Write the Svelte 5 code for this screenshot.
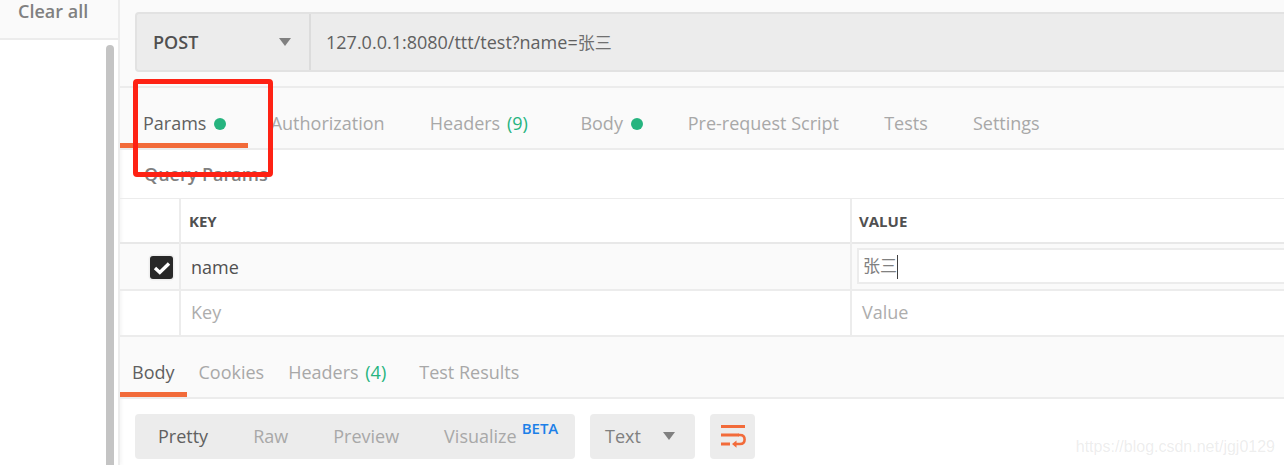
<script>
    const requestTabs = [
        { name: 'Params', dot: true, active: true },
        { name: 'Authorization' },
        { name: 'Headers', count: 9 },
        { name: 'Body', dot: true },
        { name: 'Pre-request Script' },
        { name: 'Tests' },
        { name: 'Settings' }
    ];
    const responseTabs = [
        { name: 'Body', active: true },
        { name: 'Cookies' },
        { name: 'Headers', count: 4 },
        { name: 'Test Results' }
    ];
</script>

<div class="page">
    <aside class="sidebar">
        <div class="clear">Clear all</div>
        <div class="history">
            <div class="scrollbar"></div>
        </div>
    </aside>

    <main>
        <div class="request">
            <div class="urlbar">
                <div class="method">
                    <span>POST</span>
                    <i class="caret"></i>
                </div>
                <div class="url">127.0.0.1:8080/ttt/test?name=<span class="cjk">张三</span></div>
            </div>
        </div>

        <nav class="tabs reqtabs">
            {#each requestTabs as tab}
                <div class="tab" class:active={tab.active} class:counted={tab.count}>
                    {tab.name}
                    {#if tab.count}<span class="count">({tab.count})</span>{/if}
                    {#if tab.dot}<i class="dot"></i>{/if}
                </div>
            {/each}
        </nav>

        <div class="query">Query Params</div>

        <div class="table">
            <div class="row head">
                <div class="check"></div>
                <div class="key">KEY</div>
                <div class="value">VALUE</div>
            </div>
            <div class="row filled">
                <div class="check">
                    <span class="box">
                        <svg width="18" height="14" viewBox="0 0 18 14">
                            <path d="M2 7 L6.8 11.5 L16 2.5" fill="none" stroke="#fff" stroke-width="3.4" />
                        </svg>
                    </span>
                </div>
                <div class="key cell">name</div>
                <div class="value editing">
                    <div class="input">张三<i class="cursor"></i></div>
                </div>
            </div>
            <div class="row empty">
                <div class="check"></div>
                <div class="key cell">Key</div>
                <div class="value cell">Value</div>
            </div>
        </div>

        <nav class="tabs restabs">
            {#each responseTabs as tab}
                <div class="tab" class:active={tab.active} class:counted={tab.count}>
                    {tab.name}
                    {#if tab.count}<span class="count">({tab.count})</span>{/if}
                </div>
            {/each}
        </nav>

        <div class="toolbar">
            <div class="modes">
                <span class="on">Pretty</span>
                <span>Raw</span>
                <span>Preview</span>
                <span class="vis">Visualize<sup>BETA</sup></span>
            </div>
            <div class="format">
                <span>Text</span>
                <i class="caret"></i>
            </div>
            <div class="wrap">
                <svg width="26" height="24" viewBox="0 0 26 24">
                    <path d="M1 1.5 H25 M1 10 H19 M1 19 H10" fill="none" stroke="#f26b3a" stroke-width="2.8" />
                    <path d="M18 10 H20 C23 10 24.6 12 24.6 14.5 C24.6 17.5 22.8 19 20 19 H15" fill="none" stroke="#f26b3a" stroke-width="2.6" />
                    <path d="M16.5 15.5 L12 19 L16.5 22.8 Z" fill="#f26b3a" />
                </svg>
            </div>
            <div class="watermark">https://blog.csdn.net/jgj0129</div>
        </div>
    </main>

    <div class="highlight"></div>
</div>

<style>
    :global(body) {
        margin: 0;
        background: #fff;
        overflow: hidden;
    }
    .page {
        position: relative;
        display: flex;
        width: 1284px;
        height: 465px;
        overflow: hidden;
        font-family: "Open Sans", "Noto Sans CJK SC", sans-serif;
        font-size: 18px;
        color: #505050;
    }
    .sidebar {
        width: 120px;
        box-sizing: border-box;
        flex: none;
        display: flex;
        flex-direction: column;
        border-right: 2px solid #ececec;
        box-shadow: 2px 0 3px rgba(0, 0, 0, 0.04);
    }
    .clear {
        height: 42px;
        box-sizing: border-box;
        padding-left: 18px;
        line-height: 23px;
        color: #808080;
        font-weight: 600;
        background: #fafafa;
        border-bottom: 2px solid #ececec;
    }
    .history {
        flex: 1;
        padding: 5px 4px 0 106px;
    }
    .scrollbar {
        width: 8px;
        height: 420px;
        border-radius: 4px 4px 0 0;
        background: #c4c4c4;
    }
    main {
        flex: 1;
        min-width: 0;
    }
    .request {
        height: 88px;
        box-sizing: border-box;
        padding: 12px 0 0 15px;
        background: #fafafa;
        border-bottom: 2px solid #ececec;
    }
    .urlbar {
        display: flex;
        height: 60px;
        box-sizing: border-box;
        border: 2px solid #e2e2e2;
        border-right: 0;
        border-radius: 4px 0 0 4px;
        background: #ececec;
    }
    .method {
        width: 174px;
        box-sizing: border-box;
        display: flex;
        align-items: center;
        justify-content: space-between;
        padding: 0 18px 0 16px;
        border-right: 2px solid #dcdcdc;
        font-weight: 600;
    }
    .url {
        flex: 1;
        padding-left: 15px;
        line-height: 56px;
        color: #606060;
    }
    .cjk {
        font-size: 17px;
        color: #707070;
    }
    .caret {
        width: 0;
        height: 0;
        border-left: 6.5px solid transparent;
        border-right: 6.5px solid transparent;
        border-top: 8px solid #808080;
    }
    .tabs {
        display: flex;
        box-sizing: border-box;
        background: #fafafa;
        border-bottom: 2px solid #ececec;
        color: #a8a8a8;
    }
    .tab {
        box-sizing: border-box;
        white-space: nowrap;
        border-bottom: 5px solid transparent;
    }
    .tab.active {
        color: #606060;
        border-bottom-color: #f26b3a;
    }
    .reqtabs {
        height: 62px;
    }
    .reqtabs .tab {
        height: 60px;
        padding: 23px 22.6px 0;
    }
    .reqtabs .tab.active {
        padding: 23px 22px 0 23px;
    }
    .reqtabs .tab.counted {
        padding-right: 30px;
    }
    .restabs {
        height: 62px;
    }
    .restabs .tab {
        height: 60px;
        padding: 23px 12px 0;
    }
    .restabs .tab.counted {
        padding-right: 21px;
    }
    .count {
        margin-left: 2px;
        color: #26b47f;
    }
    .dot {
        display: inline-block;
        width: 12px;
        height: 12px;
        margin-left: 3px;
        border-radius: 50%;
        background: #26b47f;
    }
    .query {
        height: 48px;
        box-sizing: border-box;
        padding: 12px 0 0 24px;
        font-weight: 600;
        line-height: 24px;
        color: #808080;
    }
    .table {
        border-top: 1px solid #ececec;
    }
    .row {
        display: grid;
        grid-template-columns: 61px 671px 1fr;
        box-sizing: border-box;
    }
    .row > div {
        box-sizing: border-box;
    }
    .row > div:not(:last-child) {
        border-right: 2px solid #ececec;
    }
    .head {
        height: 45px;
        line-height: 45px;
        border-bottom: 2px solid #e8e8e8;
        font-size: 15px;
        font-weight: 700;
    }
    .head .key {
        padding-left: 8px;
    }
    .head .value {
        padding-left: 7px;
    }
    .filled {
        height: 47px;
        background: #fafafa;
        border-bottom: 2px solid #ececec;
    }
    .empty {
        height: 46px;
        border-bottom: 2px solid #ececec;
        color: #adadad;
    }
    .check {
        display: flex;
        align-items: center;
        justify-content: flex-end;
        padding: 1px 6px 0 0;
    }
    .box {
        width: 23px;
        height: 23px;
        display: flex;
        align-items: center;
        justify-content: center;
        border-radius: 3px;
        background: #282828;
        box-shadow: 0 0 0 1.5px #eeeeee;
    }
    .cell {
        padding-left: 10px;
        line-height: 46px;
    }
    .empty .cell {
        line-height: 42px;
    }
    .editing {
        padding: 4px 0 0 5px;
        overflow: hidden;
    }
    .input {
        height: 36px;
        box-sizing: border-box;
        margin-right: -10px;
        padding-left: 4px;
        border: 2px solid #ececec;
        background: #fff;
        font-size: 17px;
        line-height: 32px;
        color: #808080;
    }
    .cursor {
        display: inline-block;
        width: 1px;
        height: 24px;
        background: #404040;
        vertical-align: middle;
    }
    .toolbar {
        position: relative;
        display: flex;
        gap: 15px;
        padding: 15px 0 0 15px;
    }
    .modes,
    .format,
    .wrap {
        height: 45px;
        box-sizing: border-box;
        display: flex;
        align-items: center;
        background: #ececec;
        border-radius: 4px;
    }
    .modes {
        width: 440px;
        padding: 0 0 2px 23px;
        color: #a8a8a8;
    }
    .modes span {
        margin-right: 45px;
    }
    .modes span.on {
        color: #606060;
    }
    .modes span.vis {
        margin: 0;
    }
    sup {
        margin-left: 5px;
        font-size: 15px;
        font-weight: 600;
        line-height: 0;
        vertical-align: 9px;
        color: #1c80e8;
    }
    .format {
        width: 105px;
        justify-content: space-between;
        padding: 0 20px 2px 15px;
        color: #808080;
    }
    .wrap {
        width: 45px;
        justify-content: center;
    }
    .watermark {
        position: absolute;
        right: 9px;
        bottom: 3px;
        font-family: "Liberation Sans", sans-serif;
        font-size: 16px;
        color: rgba(120, 120, 120, 0.14);
    }
    .highlight {
        position: absolute;
        left: 133px;
        top: 79px;
        width: 130px;
        height: 88px;
        border: 5px solid #fe2214;
        border-radius: 4px;
    }
</style>
